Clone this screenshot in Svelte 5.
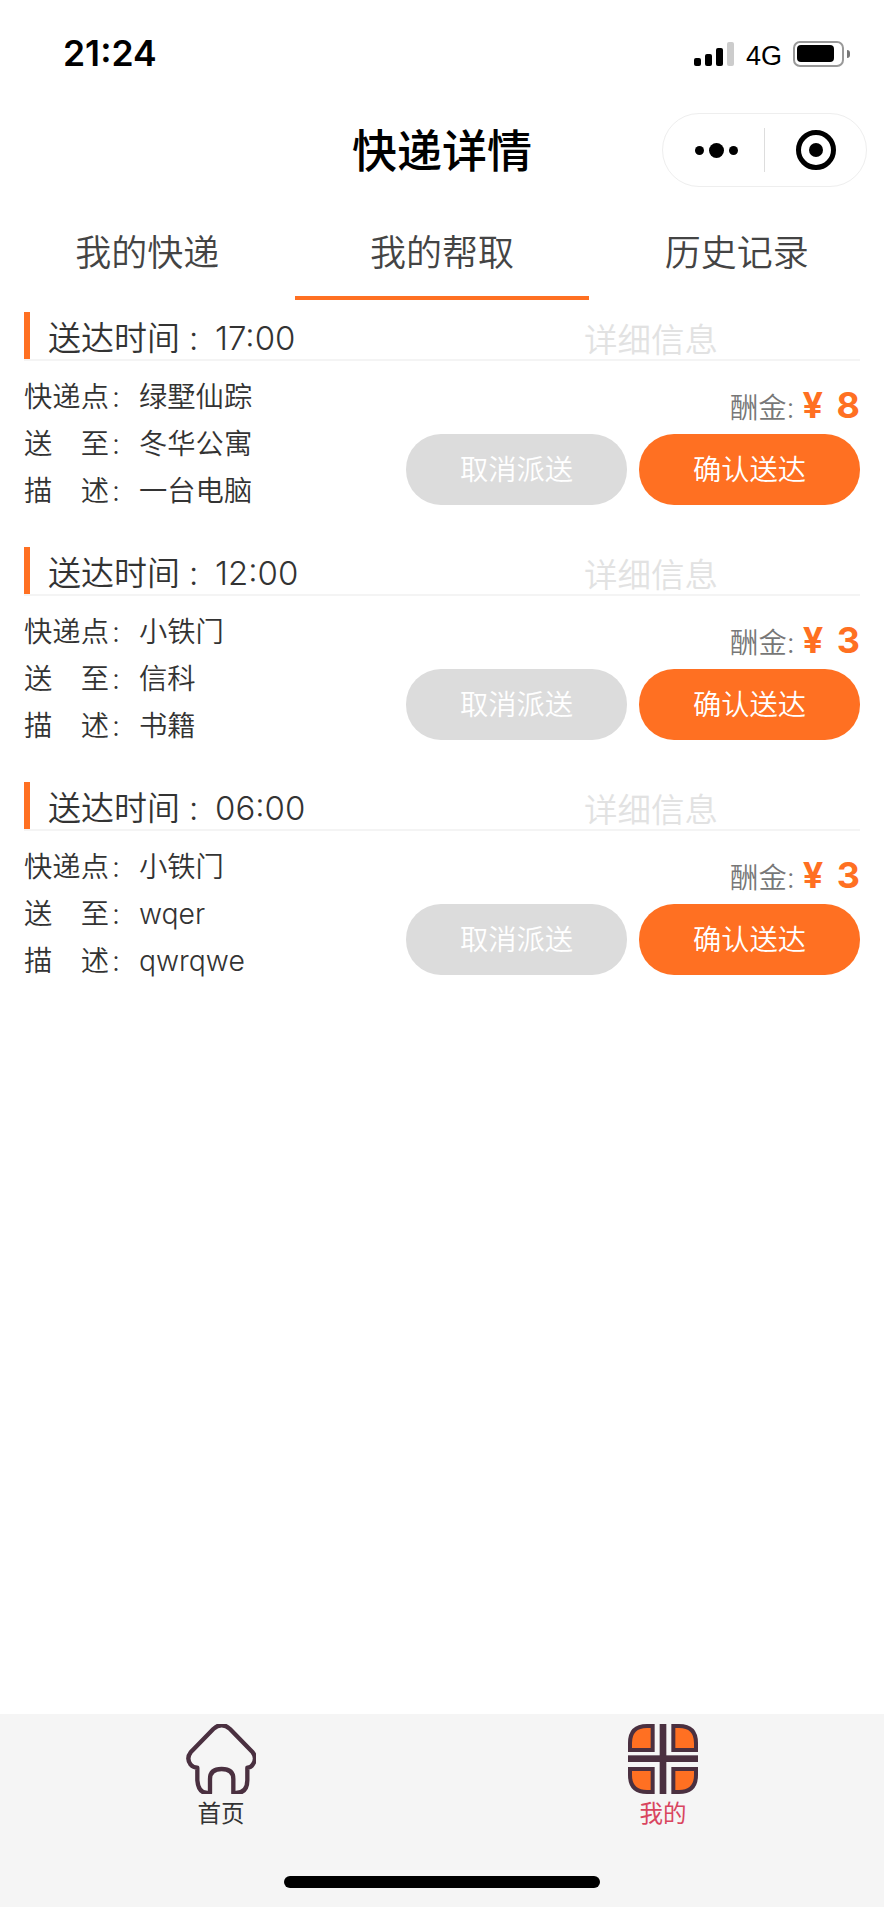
<script>
  const tabs = ['我的快递', '我的帮取', '历史记录']
  let active = 1

  const orders = [
    { time: '17:00', from: '绿墅仙踪', to: '冬华公寓', desc: '一台电脑', money: 8 },
    { time: '12:00', from: '小铁门', to: '信科', desc: '书籍', money: 3 },
    { time: '06:00', from: '小铁门', to: 'wqer', desc: 'qwrqwe', money: 3 }
  ]

  const quarters = [
    'M129 49H112Q61 49 61 100V121H129Z',
    'M191 49H208Q259 49 259 100V121H191Z',
    'M129 247H112Q61 247 61 196V178H129Z',
    'M191 247H208Q259 247 259 196V178H191Z'
  ]
</script>

<div class="page">
  <div class="status">
    <span class="clock">21:24</span>
    <div class="indicators">
      <div class="signal">
        <i class="b1"></i><i class="b2"></i><i class="b3"></i><i class="b4"></i>
      </div>
      <span class="net">4G</span>
      <div class="battery"><div class="level"></div></div>
      <div class="nub"></div>
    </div>
  </div>

  <div class="nav">
    <span></span>
    <h1>快递详情</h1>
    <div class="capsule">
      <div class="more"><i></i><i class="big"></i><i></i></div>
      <div class="sep"></div>
      <div class="target"><i></i></div>
    </div>
  </div>

  <div class="tabs">
    {#each tabs as tab, i}
      <div class="tab" class:on={i === active}>{tab}</div>
    {/each}
  </div>

  <div class="list">
    {#each orders as o}
      <div class="card">
        <div class="head">
          <div class="when">送达时间<span class="colon">:</span>{o.time}</div>
          <div class="detail">详细信息</div>
        </div>
        <div class="body">
          <div class="rows">
            <div class="row"><span class="label">快递点</span><span class="colon">:</span>{o.from}</div>
            <div class="row"><span class="label">送至</span><span class="colon">:</span>{o.to}</div>
            <div class="row"><span class="label">描述</span><span class="colon">:</span>{o.desc}</div>
          </div>
          <div class="side">
            <div class="reward">酬金:<b>¥ {o.money}</b></div>
            <div class="btns">
              <div class="btn off">取消派送</div>
              <div class="btn ok">确认送达</div>
            </div>
          </div>
        </div>
      </div>
    {/each}
  </div>

  <div class="tabbar">
    <div class="items">
      <div class="item">
        <svg width="70" height="70" viewBox="48 43 210 210">
          <path d="M130 58Q155 35 180 58L248 128Q262 146 248 165Q243 174 232 174V212Q232 250 198 250H190V208Q190 178 155 178Q120 178 120 208V250H112Q85 250 82 212V174Q70 174 62 165Q48 146 62 128Z" fill="none" stroke="#4a3040" stroke-width="13" stroke-linejoin="round"/>
        </svg>
        <span>首页</span>
      </div>
      <div class="item mine">
        <svg width="70" height="70" viewBox="55 43 210 210">
          <rect x="150" y="43" width="20" height="210" fill="#4a3040"/>
          <rect x="55" y="137" width="210" height="20" fill="#4a3040"/>
          {#each quarters as d}
            <path {d} fill="#ff7022" stroke="#4a3040" stroke-width="12"/>
          {/each}
        </svg>
        <span>我的</span>
      </div>
    </div>
    <div class="homebar"></div>
  </div>
</div>

<style>
  :global(body) {
    background: #fff;
  }
  .page {
    display: flex;
    flex-direction: column;
    height: 1907px;
    font-family: Inter, "Noto Sans CJK SC", sans-serif;
    font-weight: 350;
    color: #333;
  }

  .status {
    height: 108px;
    box-sizing: border-box;
    padding: 0 34px 0 63px;
    display: flex;
    align-items: center;
    justify-content: space-between;
    color: #000;
  }
  .clock {
    font-size: 35.5px;
    line-height: 40px;
    font-weight: 600;
  }
  .indicators {
    display: flex;
    align-items: center;
  }
  .signal {
    display: flex;
    align-items: flex-end;
    gap: 4px;
    height: 24px;
  }
  .signal i {
    display: block;
    width: 7px;
    border-radius: 2px;
    background: #000;
  }
  .b1 { height: 8px; }
  .b2 { height: 12px; }
  .b3 { height: 18px; }
  .signal .b4 { height: 24px; background: #ccc; }
  .net {
    font-family: "Liberation Sans", sans-serif;
    font-weight: 400;
    font-size: 27px;
    line-height: 30px;
    padding-top: 3px;
    margin: 0 11px 0 12px;
  }
  .battery {
    width: 51px;
    height: 26px;
    box-sizing: border-box;
    border: 2.5px solid #999;
    border-radius: 7px;
    padding: 2px;
  }
  .level {
    width: 37px;
    height: 17px;
    background: #000;
    border-radius: 4px;
  }
  .nub {
    width: 3px;
    height: 8px;
    margin-left: 3px;
    background: #777;
    border-radius: 0 3px 3px 0;
  }

  .nav {
    height: 84px;
    display: grid;
    grid-template-columns: 1fr auto 1fr;
    align-items: center;
    padding-right: 17px;
    padding-left: 17px;
  }
  h1 {
    margin: 3px 0 0;
    font-size: 45px;
    line-height: 60px;
    font-weight: 500;
    color: #000;
  }
  .capsule {
    justify-self: end;
    width: 205px;
    height: 74px;
    box-sizing: border-box;
    border: 1px solid #eee;
    border-radius: 37px;
    display: flex;
    align-items: center;
  }
  .more {
    flex: 0 0 101px;
    box-sizing: border-box;
    display: flex;
    align-items: center;
    justify-content: center;
    gap: 5px;
    padding-left: 6px;
  }
  .more i {
    width: 9px;
    height: 9px;
    border-radius: 50%;
    background: #000;
  }
  .more .big {
    width: 15px;
    height: 15px;
  }
  .sep {
    width: 1px;
    height: 44px;
    background: #ddd;
  }
  .target {
    flex: 1;
    display: flex;
    align-items: center;
    justify-content: center;
  }
  .target i {
    width: 40px;
    height: 40px;
    box-sizing: border-box;
    border: 5px solid #000;
    border-radius: 50%;
    display: flex;
    align-items: center;
    justify-content: center;
  }
  .target i::after {
    content: "";
    width: 14px;
    height: 14px;
    background: #000;
    border-radius: 50%;
  }

  .tabs {
    display: flex;
    height: 108px;
  }
  .tab {
    flex: 1;
    box-sizing: border-box;
    text-align: center;
    font-size: 36px;
    line-height: 50px;
    padding-top: 36px;
    border-bottom: 4px solid transparent;
    color: #444;
  }
  .tab.on {
    border-bottom-color: #ff7022;
  }

  .list {
    flex: 1;
    padding: 12px 24px 0;
  }
  .card {
    margin-bottom: 32px;
  }
  .head {
    display: flex;
    align-items: center;
    height: 47px;
    border-bottom: 2px solid #f4f4f4;
    font-size: 33px;
  }
  .when {
    box-sizing: border-box;
    flex: 0 0 560px;
    height: 47px;
    line-height: 53px;
    border-left: 6.5px solid #ff7022;
    padding-left: 18px;
  }
  .when .colon {
    width: 35px;
    padding-left: 9px;
  }
  .detail {
    color: #e2e2e2;
    font-size: 33.5px;
    line-height: 57px;
    height: 47px;
  }
  .colon {
    display: inline-block;
    width: 30px;
    padding-left: 3px;
    box-sizing: border-box;
  }

  .body {
    display: flex;
    justify-content: space-between;
    padding-top: 13px;
  }
  .rows {
    font-size: 28.3px;
  }
  .row {
    height: 47px;
    line-height: 47px;
  }
  .label {
    display: inline-block;
    width: 85px;
    text-align-last: justify;
  }

  .side {
    padding-top: 14px;
    display: flex;
    flex-direction: column;
    align-items: flex-end;
  }
  .reward {
    height: 40px;
    line-height: 34px;
    margin-bottom: 6px;
    font-size: 28.3px;
    color: #777;
  }
  .reward b {
    margin-left: 8px;
    font-size: 36px;
    font-weight: 700;
    word-spacing: 5px;
    color: #ff7022;
  }
  .btns {
    display: flex;
    gap: 12px;
  }
  .btn {
    width: 221px;
    height: 71px;
    line-height: 73px;
    border-radius: 35px;
    text-align: center;
    font-size: 28.3px;
    color: #fff;
  }
  .off { background: #dcdcdc; }
  .ok { background: #ff7022; }

  .tabbar {
    height: 193px;
    background: #f5f5f5;
    position: relative;
  }
  .items {
    display: flex;
    padding-top: 10px;
  }
  .item {
    flex: 1;
    display: flex;
    flex-direction: column;
    align-items: center;
    font-size: 23.5px;
    font-weight: 400;
    color: #333;
  }
  .item span {
    line-height: 38px;
    margin-top: 1px;
  }
  .mine {
    color: #d9455f;
  }
  .homebar {
    position: absolute;
    left: 284px;
    top: 162px;
    width: 316px;
    height: 12px;
    border-radius: 6px;
    background: #000;
  }
</style>
